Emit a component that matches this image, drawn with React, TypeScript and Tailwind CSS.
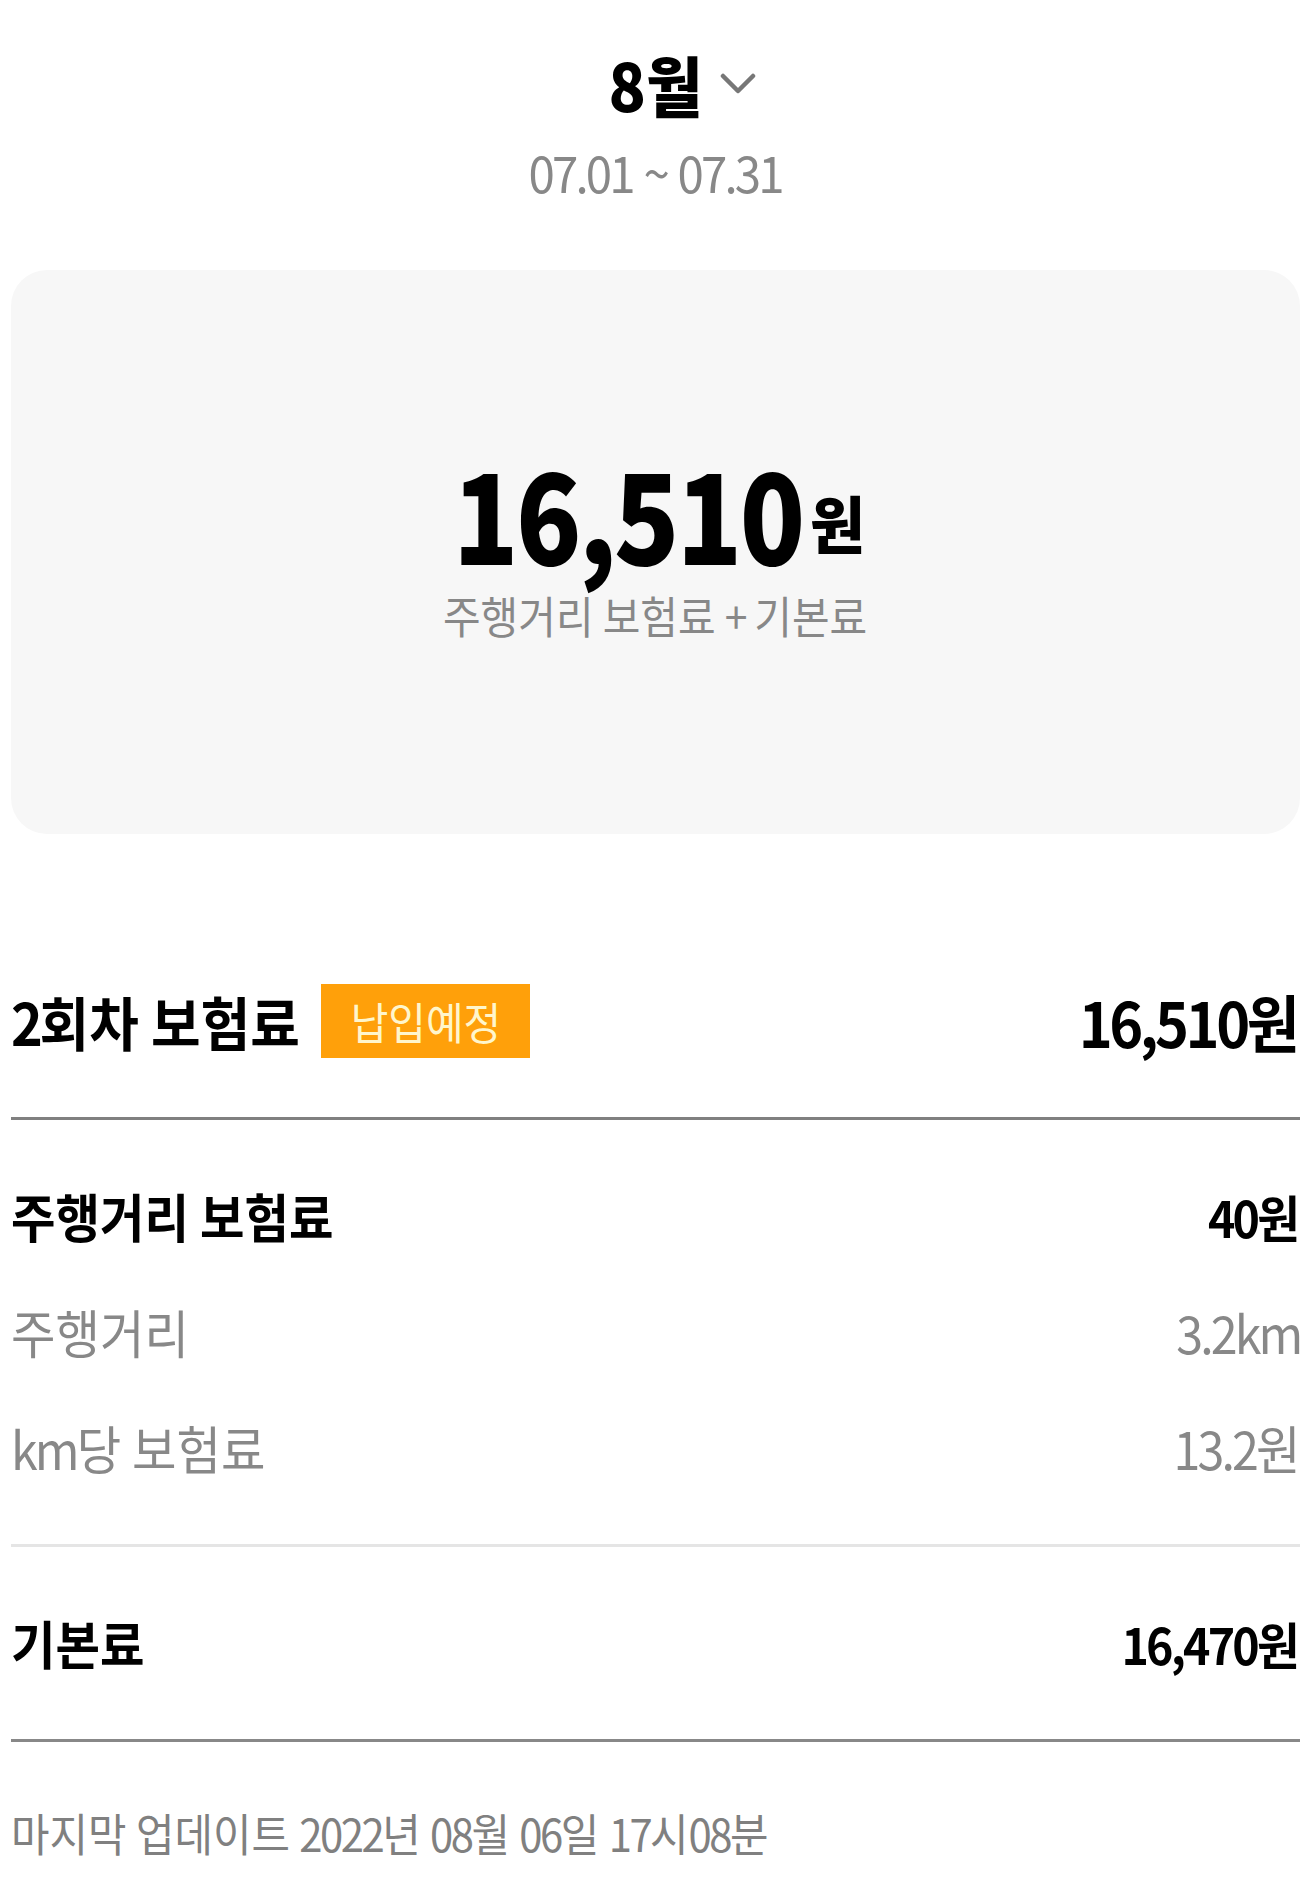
import type { ReactNode } from "react";

const FONT = "font-['Noto_Sans_CJK_KR','Noto_Sans',sans-serif]";

// the reference face is narrow: hangul a bit, digits more. squeeze whole run, tighten digit runs
function Narrow({ children, origin = "left", className = "" }: { children: ReactNode; origin?: "left" | "right" | "center"; className?: string }) {
  const o = origin === "left" ? "origin-left" : origin === "right" ? "origin-right" : "origin-center";
  return <span className={`inline-block whitespace-nowrap scale-x-[0.93] ${o} ${className}`}>{children}</span>;
}

function Mix({ text }: { text: string }) {
  const parts = text.split(/([0-9.,~+a-z]+)/);
  return (
    <>
      {parts.map((p, i) =>
        i % 2 === 1 ? (
          <span key={i} className="tracking-[-0.06em]">{p}</span>
        ) : (
          <span key={i}>{p}</span>
        )
      )}
    </>
  );
}

function Row({ label, value, strong }: { label: string; value: string; strong?: boolean }) {
  const tone = strong ? "font-bold text-black" : "font-normal text-[#888888]";
  return (
    <div className={`flex h-[116px] items-center justify-between leading-none ${tone}`}>
      <Narrow className="text-[52px]"><Mix text={label} /></Narrow>
      <Narrow origin="right" className={strong ? "text-[50px]" : "text-[52px]"}><Mix text={value} /></Narrow>
    </div>
  );
}

export default function App() {
  return (
    <div className={`min-h-screen bg-white pl-[11px] pr-[6px] ${FONT}`}>
      {/* month header */}
      <div className="flex flex-col items-center pt-[50px]">
        <button className="relative flex items-center">
          <Narrow origin="center" className="text-[66px] font-black leading-none text-black">8월</Narrow>
          <svg width="36" height="24" viewBox="0 0 36 24" fill="none" className="absolute left-full top-1/2 ml-[14px] -translate-y-1/2">
            <path d="M3 5 L18 20 L33 5" stroke="#777777" strokeWidth="4.5" strokeLinecap="round" strokeLinejoin="round" />
          </svg>
        </button>
        <div className="mt-[30px] text-[51px] leading-none text-[#888888]">
          <Narrow origin="center"><Mix text="07.01 ~ 07.31" /></Narrow>
        </div>
      </div>

      {/* total card */}
      <div className="mt-[73px] flex h-[564px] flex-col items-center rounded-[36px] bg-[#f7f7f7] pt-[163px]">
        <div className="flex scale-x-[0.86] items-end font-black leading-[1.25] text-black">
          <span className="text-[125px] tracking-[-3px]">16,510</span>
          <span className="mb-[36px] ml-[8px] inline-block origin-left scale-x-[1.12] text-[62px] leading-none">원</span>
        </div>
        <Narrow origin="center" className="mt-[4px] text-[44px] leading-none text-[#888888]">
          <Mix text="주행거리 보험료 + 기본료" />
        </Narrow>
      </div>

      {/* breakdown */}
      <div className="mt-[129px]">
        <div className="flex h-[116px] items-center justify-between leading-none">
          <div className="flex items-center">
            <span className="w-[290px]">
              <Narrow className="text-[58px] font-bold text-black"><Mix text="2회차 보험료" /></Narrow>
            </span>
            <span className="ml-[20px] flex h-[74px] w-[209px] items-center justify-center bg-[#ffa00a]">
              <Narrow origin="center" className="text-[44px] text-[#fff6cc]">납입예정</Narrow>
            </span>
          </div>
          <Narrow origin="right" className="text-[62px] font-bold text-black"><Mix text="16,510원" /></Narrow>
        </div>

        <div className="my-[38px] h-[3px] bg-[#808080]" />

        <Row label="주행거리 보험료" value="40원" strong />
        <Row label="주행거리" value="3.2km" />
        <Row label="km당 보험료" value="13.2원" />

        <div className="my-[38px] h-[3px] bg-[#e5e5e5]" />

        <Row label="기본료" value="16,470원" strong />

        <div className="my-[38px] h-[3px] bg-[#888888]" />

        <div className="mt-[68px] text-[45px] leading-none text-[#808080]">
          <Narrow><Mix text="마지막 업데이트 2022년 08월 06일 17시08분" /></Narrow>
        </div>
      </div>
    </div>
  );
}
